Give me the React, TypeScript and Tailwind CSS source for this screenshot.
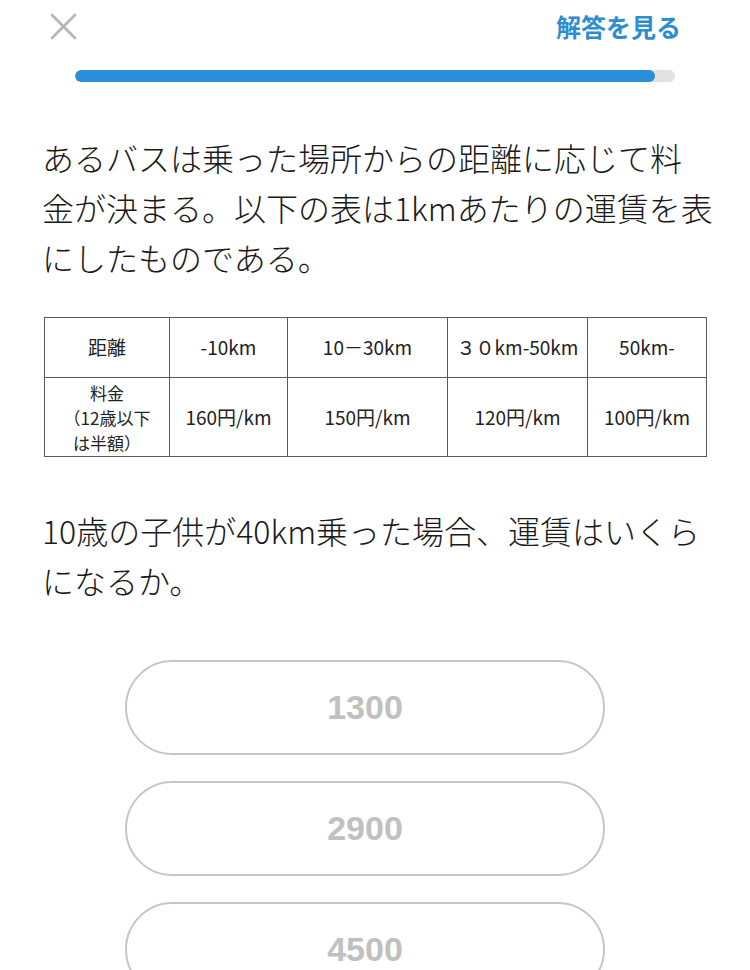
import React from 'react';

const jp = { fontFamily: '"Noto Sans CJK JP", "Noto Sans", sans-serif' };

const heads = ['距離', '-10km', '10－30km', '３０km-50km', '50km-'];
const prices = ['160円/km', '150円/km', '120円/km', '100円/km'];
const widths = ['w-[125px]', 'w-[118px]', 'w-[160px]', 'w-[140px]', 'w-[119px]'];
const choices = ['1300', '2900', '4500'];

export default function App() {
  return (
    <div className="w-[750px] h-[970px] overflow-hidden bg-white text-[#1a1a1a]" style={jp}>
      {/* header */}
      <div className="flex items-start justify-between pl-[50px] pr-[69px] pt-[13px] h-[70px]">
        <svg width="27" height="27" viewBox="0 0 27 27" className="text-[#b5b5b5]">
          <path d="M2 2 L25 25 M25 2 L2 25" stroke="currentColor" strokeWidth="2.6" strokeLinecap="round" />
        </svg>
        <span className="text-[25px] leading-[28px] font-bold text-[#2d8dd3] -mt-[1px]">解答を見る</span>
      </div>

      {/* progress */}
      <div className="ml-[75px] w-[600px] h-[12px] rounded-full bg-[#e1e1e1] overflow-hidden">
        <div className="h-full w-[580px] rounded-full bg-[#2a8fdb]" />
      </div>

      {/* question */}
      <div className="pl-[42px] pr-[30px] pt-[50px] text-[32px] leading-[50px] font-light">
        <div>あるバスは乗った場所からの距離に応じて料</div>
        <div>金が決まる。以下の表は1kmあたりの運賃を表</div>
        <div>にしたものである。</div>
      </div>

      <div className="pl-[44px] pt-[35px]">
        <table className="border-collapse text-[19px] font-normal text-[#222]">
          <tbody>
            <tr className="h-[60px]">
              {heads.map((h, i) => (
                <td key={h} className={`${widths[i]} border border-[#5a5a5a] text-center align-middle`}>
                  {h}
                </td>
              ))}
            </tr>
            <tr className="h-[79px]">
              <td className={`${widths[0]} border border-[#5a5a5a] text-center align-middle text-[17px] leading-[25px]`}>
                料金<br />（12歳以下<br />は半額）
              </td>
              {prices.map((p, i) => (
                <td key={p} className={`${widths[i + 1]} border border-[#5a5a5a] text-center align-middle`}>
                  {p}
                </td>
              ))}
            </tr>
          </tbody>
        </table>
      </div>

      <div className="pl-[42px] pr-[30px] pt-[48px] text-[32px] leading-[50px] font-light">
        <div>10歳の子供が40km乗った場合、運賃はいくら</div>
        <div>になるか。</div>
      </div>

      {/* choices */}
      <div className="flex flex-col gap-[26px] pl-[125px] pt-[55px]">
        {choices.map((c) => (
          <button
            key={c}
            className="w-[480px] h-[95px] shrink-0 rounded-full border-2 border-[#c6c6c6] bg-white text-[34px] font-bold text-[#c0c0c0]"
            style={{ fontFamily: '"Liberation Sans", Arial, sans-serif' }}
          >
            {c}
          </button>
        ))}
      </div>
    </div>
  );
}
